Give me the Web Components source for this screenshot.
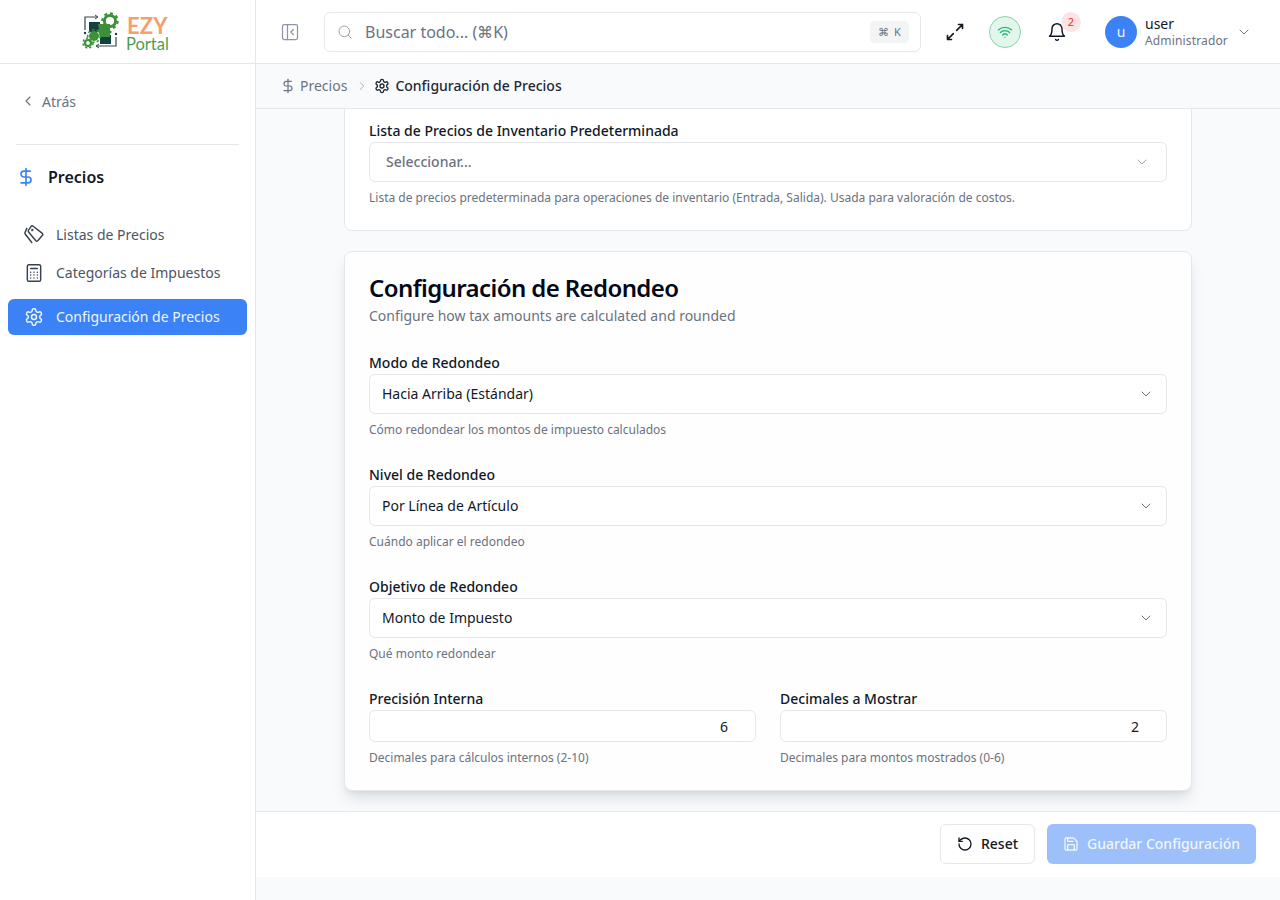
<!doctype html>
<html lang="es">
<head>
<meta charset="utf-8">
<title>Configuración de Precios</title>
<style>
  html, body { margin: 0; height: 100%; overflow: hidden; }
  body { font-family: "Noto Sans", sans-serif; background: #f8fafc; color: #111827; }
</style>
</head>
<body>
<app-shell>
  <app-sidebar slot="sidebar"></app-sidebar>
  <app-header slot="header"></app-header>
  <bread-crumb slot="crumbs"></bread-crumb>

  <form-card>
    <form-field label="Lista de Precios de Inventario Predeterminada" hint="Lista de precios predeterminada para operaciones de inventario (Entrada, Salida). Usada para valoración de costos.">
      <select-box placeholder value="Seleccionar..."></select-box>
    </form-field>
  </form-card>

  <form-card heading="Configuración de Redondeo" sub="Configure how tax amounts are calculated and rounded" raised>
    <form-field label="Modo de Redondeo" hint="Cómo redondear los montos de impuesto calculados">
      <select-box value="Hacia Arriba (Estándar)"></select-box>
    </form-field>
    <form-field label="Nivel de Redondeo" hint="Cuándo aplicar el redondeo">
      <select-box value="Por Línea de Artículo"></select-box>
    </form-field>
    <form-field label="Objetivo de Redondeo" hint="Qué monto redondear">
      <select-box value="Monto de Impuesto"></select-box>
    </form-field>
    <field-row>
      <form-field label="Precisión Interna" hint="Decimales para cálculos internos (2-10)">
        <number-box value="6"></number-box>
      </form-field>
      <form-field label="Decimales a Mostrar" hint="Decimales para montos mostrados (0-6)">
        <number-box value="2"></number-box>
      </form-field>
    </field-row>
  </form-card>

  <action-bar slot="footer"></action-bar>
</app-shell>

<script>
const ICONS = {
  panel: '<rect x="3" y="3" width="18" height="18" rx="2"/><path d="M9 3v18"/><path d="m16 15-3-3 3-3"/>',
  search: '<circle cx="11" cy="11" r="8"/><path d="m21 21-4.3-4.3"/>',
  expand: '<path d="M3 16.2V21m0 0h4.8M3 21l7-7"/><path d="M21 7.8V3m0 0h-4.8M21 3l-7 7"/>',
  wifi: '<path d="M12 20h.01"/><path d="M2 8.82a15 15 0 0 1 20 0"/><path d="M5 12.86a10 10 0 0 1 14 0"/><path d="M8.5 16.43a5 5 0 0 1 7 0"/>',
  bell: '<path d="M6 8a6 6 0 0 1 12 0c0 7 3 9 3 9H3s3-2 3-9"/><path d="M10.3 21a1.94 1.94 0 0 0 3.4 0"/>',
  down: '<path d="m6 9 6 6 6-6"/>',
  left: '<path d="m15 18-6-6 6-6"/>',
  right: '<path d="m9 18 6-6-6-6"/>',
  dollar: '<path d="M12 2v20"/><path d="M17 5H9.5a3.5 3.5 0 0 0 0 7h5a3.5 3.5 0 0 1 0 7H6"/>',
  tags: '<path d="M8.6 1.6 5.4 6.2a1.6 1.6 0 0 0 .1 2.1l8.7 10.6a1.6 1.6 0 0 0 2.3 0l5.6-6.6a1.6 1.6 0 0 0-.5-2.5L10.6 1.2a1.7 1.7 0 0 0-2 .4z"/><path d="M3.4 4 1.2 9a2 2 0 0 0 .4 2.1L9.4 21"/><circle cx="10" cy="6" r=".6"/>',
  calc: '<rect x="4" y="2" width="16" height="20" rx="2"/><path d="M8 6.5h8"/><path d="M8 11h.01M12 11h.01M16 11h.01M8 14.5h.01M12 14.5h.01M16 14.5h.01M8 18h.01M12 18h.01M16 18h.01"/>',
  gear: '<path d="M12.22 2h-.44a2 2 0 0 0-2 2v.18a2 2 0 0 1-1 1.73l-.43.25a2 2 0 0 1-2 0l-.15-.08a2 2 0 0 0-2.73.73l-.22.38a2 2 0 0 0 .73 2.73l.15.1a2 2 0 0 1 1 1.72v.51a2 2 0 0 1-1 1.74l-.15.09a2 2 0 0 0-.73 2.73l.22.38a2 2 0 0 0 2.73.73l.15-.08a2 2 0 0 1 2 0l.43.25a2 2 0 0 1 1 1.73V20a2 2 0 0 0 2 2h.44a2 2 0 0 0 2-2v-.18a2 2 0 0 1 1-1.73l.43-.25a2 2 0 0 1 2 0l.15.08a2 2 0 0 0 2.73-.73l.22-.39a2 2 0 0 0-.73-2.73l-.15-.08a2 2 0 0 1-1-1.74v-.5a2 2 0 0 1 1-1.74l.15-.09a2 2 0 0 0 .73-2.73l-.22-.38a2 2 0 0 0-2.73-.73l-.15.08a2 2 0 0 1-2 0l-.43-.25a2 2 0 0 1-1-1.73V4a2 2 0 0 0-2-2z"/><circle cx="12" cy="12" r="3"/>',
  reset: '<path d="M3 12a9 9 0 1 0 9-9 9.75 9.75 0 0 0-6.74 2.74L3 8"/><path d="M3 3v5h5"/>',
  save: '<path d="M15.2 3a2 2 0 0 1 1.4.6l3.8 3.8a2 2 0 0 1 .6 1.4V19a2 2 0 0 1-2 2H5a2 2 0 0 1-2-2V5a2 2 0 0 1 2-2z"/><path d="M17 21v-7a1 1 0 0 0-1-1H8a1 1 0 0 0-1 1v7"/><path d="M7 3v4a1 1 0 0 0 1 1h7"/>'
};

class uiIcon extends HTMLElement {
  connectedCallback() {
    const size = this.getAttribute("size") || 16;
    const weight = this.getAttribute("weight") || 2;
    this.attachShadow({ mode: "open" }).innerHTML = /* html */ `
      <style>:host { display: inline-flex; flex: none; } svg { display: block; overflow: visible; }</style>
      <svg width="${size}" height="${size}" viewBox="0 0 24 24" fill="none" stroke="currentColor"
        stroke-width="${weight}" stroke-linecap="round" stroke-linejoin="round">${ICONS[this.getAttribute("name")]}</svg>`;
  }
}

class appShell extends HTMLElement {
  connectedCallback() {
    this.attachShadow({ mode: "open" }).innerHTML = /* html */ `
      <style>
        :host { display: grid; grid-template-columns: 256px 1fr; height: 900px; width: 1280px; }
        .main { display: flex; flex-direction: column; min-width: 0; height: 900px; }
        .content {
          flex: 1; min-height: 0; overflow: hidden;
          display: flex; flex-direction: column; justify-content: flex-end; gap: 20px;
          padding: 0 88px 20px;
        }
        .spacer { height: 23px; flex: none; }
      </style>
      <slot name="sidebar"></slot>
      <div class="main">
        <slot name="header"></slot>
        <slot name="crumbs"></slot>
        <div class="content"><slot></slot></div>
        <slot name="footer"></slot>
        <div class="spacer"></div>
      </div>`;
  }
}

class appSidebar extends HTMLElement {
  connectedCallback() {
    this.attachShadow({ mode: "open" }).innerHTML = /* html */ `
      <style>
        :host { display: flex; flex-direction: column; height: 900px; background: #fff; border-right: 1px solid #e5e7eb; box-sizing: border-box; }
        .logo { height: 64px; box-sizing: border-box; border-bottom: 1px solid #e5e7eb; flex: none; display: flex; align-items: center; padding-left: 80px; }
        .back { display: flex; align-items: center; gap: 6px; margin: 27px 0 0 20px; height: 20px; font-size: 14px; color: #6b7280; }
        hr { border: 0; border-top: 1px solid #e5e7eb; margin: 33px 16px 0; }
        .module { display: flex; align-items: center; gap: 12px; margin: 21px 0 0 16px; height: 22px; font-size: 16px; font-weight: 600; color: #111827; }
        .module ui-icon { color: #3b82f6; }
        nav { display: flex; flex-direction: column; margin: 28px 8px 0; }
      </style>
      <div class="logo"><ezy-logo></ezy-logo></div>
      <div class="back"><ui-icon name="left" size="16" weight="1.75"></ui-icon>Atrás</div>
      <hr>
      <div class="module"><ui-icon name="dollar" size="20"></ui-icon>Precios</div>
      <nav>
        <nav-item icon="tags" style="height:38px">Listas de Precios</nav-item>
        <nav-item icon="calc" style="height:38px">Categorías de Impuestos</nav-item>
        <nav-item icon="gear" active style="margin-top:7px">Configuración de Precios</nav-item>
      </nav>`;
  }
}

class navItem extends HTMLElement {
  connectedCallback() {
    this.attachShadow({ mode: "open" }).innerHTML = /* html */ `
      <style>
        :host { display: flex; align-items: center; gap: 12px; height: 36px; padding-left: 16px; border-radius: 6px; font-size: 14px; color: #4b5563; box-sizing: border-box; padding-bottom: 2px; }
        :host([active]) { background: #3b82f6; color: #eff6ff; }
        ui-icon { color: #374151; margin-top: 1px; }
        :host([active]) ui-icon { color: #eff6ff; }
      </style>
      <ui-icon name="${this.getAttribute("icon")}" size="20" weight="1.75"></ui-icon><slot></slot>`;
  }
}

class ezyLogo extends HTMLElement {
  connectedCallback() {
    this.attachShadow({ mode: "open" }).innerHTML = /* html */ `
      <style>
        :host { display: flex; align-items: center; gap: 3px; }
        svg { margin-top: 3px; }
        .words { display: flex; flex-direction: column; font-family: Lato, sans-serif; padding-top: 4px; }
        .ezy { font-size: 22px; line-height: 21px; font-weight: 700; color: #f4a06c; letter-spacing: .2px; }
        .portal { font-size: 16.5px; line-height: 16px; color: #4c9f50; margin-left: -1px; }
      </style>
      <svg width="44" height="42" viewBox="0 0 44 42" fill="none">
        <path d="M5 18V5h12M16 34h20V25" stroke="#33484f" stroke-width="1.2"/>
        <path d="M15 3l3 2-3 2M19 32l-3 2 3 2" stroke="#33484f" stroke-width="1"/>
        <path d="M9 10h11v10H9z" fill="#123f40"/>
        <path d="M20 23h11v9H20z" fill="#123f40"/>
        <circle cx="30" cy="9" r="5.6" stroke="#3c9138" stroke-width="3"/>
        <circle cx="30" cy="9" r="7.8" stroke="#3c9138" stroke-width="2" stroke-dasharray="3 3.1"/>
        <path d="M18 12h12v6l2 2-2 2v3H20l-1-4-2-2 2-2z" fill="#3c9138"/>
        <circle cx="14" cy="24" r="5" fill="#3c9138"/>
        <circle cx="14" cy="24" r="6.3" stroke="#3c9138" stroke-width="1.6" stroke-dasharray="2.4 2.1"/>
        <circle cx="8" cy="31" r="3" stroke="#3c9138" stroke-width="2.2"/>
        <circle cx="8" cy="31" r="5" stroke="#3c9138" stroke-width="1.5" stroke-dasharray="2.2 2"/>
        <circle cx="5" cy="21" r="1.2" fill="#1d3f42"/><circle cx="36" cy="22" r="1.2" fill="#1d3f42"/>
      </svg>
      <div class="words"><span class="ezy">EZY</span><span class="portal">Portal</span></div>`;
  }
}

class appHeader extends HTMLElement {
  connectedCallback() {
    this.attachShadow({ mode: "open" }).innerHTML = /* html */ `
      <style>
        :host { display: flex; align-items: center; height: 64px; box-sizing: border-box; background: #fff; border-bottom: 1px solid #e5e7eb; padding: 0 28px 0 24px; flex: none; }
        .toggle { color: #8f95a8; display: flex; margin-right: 24px; }
        .search { width: 597px; height: 40px; box-sizing: border-box; border: 1px solid #e5e7eb; border-radius: 6px; display: flex; align-items: center; padding: 0 11px 0 12px; color: #6b7280; font-size: 16px; }
        .search ui-icon { color: #9ca3af; margin-right: 12px; }
        .search > span { flex: 1; }
        kbd { font: 11px "Noto Sans", sans-serif; background: #f3f4f6; color: #6b7280; border-radius: 4px; height: 22px; width: 39px; display: flex; align-items: center; justify-content: center; gap: 5px; }
        kbd i { font-style: normal; }
        .full { color: #111827; margin-left: 24px; display: flex; }
        .wifi { width: 32px; height: 32px; box-sizing: border-box; border-radius: 50%; background: #e3f6ec; border: 1px solid #86d4ac; color: #22b573; display: flex; align-items: center; justify-content: center; margin-left: 24px; }
        .bell { position: relative; display: flex; margin-left: 26px; color: #111827; }
        .badge { position: absolute; top: -10px; left: 14px; width: 20px; height: 20px; border-radius: 50%; background: #fde4e4; color: #ef4444; font-size: 11px; font-weight: 500; display: flex; align-items: center; justify-content: center; }
        .avatar { width: 32px; height: 32px; border-radius: 50%; background: #3b82f6; color: #eff6ff; font-size: 14px; display: flex; align-items: center; justify-content: center; margin-left: 38px; }
        .who { margin-left: 8px; width: 90px; display: flex; flex-direction: column; }
        .who b { font-weight: 400; font-size: 14px; line-height: 19px; color: #111827; }
        .who span { font-size: 12px; line-height: 16px; color: #6b7280; letter-spacing: .15px; }
        .chev { color: #6b7280; margin-left: 1px; display: flex; }
      </style>
      <span class="toggle"><ui-icon name="panel" size="20" weight="1.5"></ui-icon></span>
      <div class="search"><ui-icon name="search" size="16" weight="1.5"></ui-icon><span>Buscar todo... (⌘K)</span><kbd><i>⌘</i><i>K</i></kbd></div>
      <span class="full"><ui-icon name="expand" size="20"></ui-icon></span>
      <span class="wifi"><ui-icon name="wifi" size="16"></ui-icon></span>
      <span class="bell"><ui-icon name="bell" size="20" weight="1.75"></ui-icon><span class="badge">2</span></span>
      <span class="avatar">u</span>
      <div class="who"><b>user</b><span>Administrador</span></div>
      <span class="chev"><ui-icon name="down" size="16" weight="1.5"></ui-icon></span>`;
  }
}

class breadCrumb extends HTMLElement {
  connectedCallback() {
    this.attachShadow({ mode: "open" }).innerHTML = /* html */ `
      <style>
        :host { display: flex; align-items: center; height: 45px; box-sizing: border-box; border-bottom: 1px solid #e5e7eb; background: #f8fafc; padding: 0 0 1px 24px; font-size: 14px; flex: none; color: #6b7280; }
        .root { display: flex; align-items: center; gap: 4px; }
        .sep { color: #9ca3af; display: flex; margin: 0 5px 0 8px; }
        .cur { display: flex; align-items: center; gap: 5px; color: #1f2937; font-weight: 500; }
        .cur ui-icon { color: #1f2937; }
      </style>
      <span class="root"><ui-icon name="dollar" size="16" weight="1.75"></ui-icon>Precios</span>
      <span class="sep"><ui-icon name="right" size="14" weight="1.5"></ui-icon></span>
      <span class="cur"><ui-icon name="gear" size="16"></ui-icon>Configuración de Precios</span>`;
  }
}

class formCard extends HTMLElement {
  connectedCallback() {
    const heading = this.getAttribute("heading");
    const head = heading ? /* html */ `
      <h2>${heading}</h2>
      <p>${this.getAttribute("sub")}</p>` : "";
    this.attachShadow({ mode: "open" }).innerHTML = /* html */ `
      <style>
        :host { display: block; flex: none; background: #fff; border: 1px solid #e5e7eb; border-radius: 8px; padding: 20px 24px 24px; box-sizing: border-box; }
        :host([raised]) { background: #fefeff; box-shadow: 0 10px 15px -3px rgba(15,23,42,.12), 0 4px 6px -4px rgba(15,23,42,.1); }
        h2 { margin: 0; font-size: 24px; line-height: 32px; font-weight: 600; color: #020817; letter-spacing: -.6px; }
        p { margin: 2px 0 27px; font-size: 14px; line-height: 20px; color: #6b7280; }
        .stack { display: flex; flex-direction: column; gap: 27px; }
      </style>
      ${head}
      <div class="stack"><slot></slot></div>`;
  }
}

class fieldRow extends HTMLElement {
  connectedCallback() {
    this.attachShadow({ mode: "open" }).innerHTML = /* html */ `
      <style>:host { display: grid; grid-template-columns: 1fr 1fr; gap: 24px; }</style>
      <slot></slot>`;
  }
}

class formField extends HTMLElement {
  connectedCallback() {
    this.attachShadow({ mode: "open" }).innerHTML = /* html */ `
      <style>
        :host { display: block; }
        label { display: block; font-size: 14px; line-height: 20px; font-weight: 500; color: #111827; margin-bottom: 1px; }
        .hint { font-size: 12px; line-height: 16px; color: #6b7280; margin-top: 8px; }
      </style>
      <label>${this.getAttribute("label")}</label>
      <slot></slot>
      <div class="hint">${this.getAttribute("hint")}</div>`;
  }
}

class selectBox extends HTMLElement {
  connectedCallback() {
    this.attachShadow({ mode: "open" }).innerHTML = /* html */ `
      <style>
        :host { display: flex; align-items: center; justify-content: space-between; height: 40px; box-sizing: border-box; border: 1px solid #e5e7eb; border-radius: 6px; background: #fff; padding: 0 12px; font-size: 14px; color: #111827; }
        :host([placeholder]) { padding: 0 16px; color: #6b7280; font-weight: 500; }
        span { margin-top: -2px; }
        ui-icon { color: #6b7280; }
        :host([placeholder]) ui-icon { color: #9ca3af; }
      </style>
      <span>${this.getAttribute("value")}</span>
      <ui-icon name="down" size="16" weight="1.5"></ui-icon>`;
  }
}

class numberBox extends HTMLElement {
  connectedCallback() {
    this.attachShadow({ mode: "open" }).innerHTML = /* html */ `
      <style>
        :host { display: flex; align-items: center; justify-content: flex-end; height: 32px; box-sizing: border-box; border: 1px solid #e5e7eb; border-radius: 6px; background: #fff; padding: 0 27px 0 12px; font-size: 14px; color: #111827; }
      </style>
      ${this.getAttribute("value")}`;
  }
}

class actionBar extends HTMLElement {
  connectedCallback() {
    this.attachShadow({ mode: "open" }).innerHTML = /* html */ `
      <style>
        :host { display: flex; align-items: center; justify-content: flex-end; gap: 12px; height: 66px; box-sizing: border-box; background: #fff; border-top: 1px solid #e5e7eb; padding: 0 24px 2px; flex: none; }
        .btn { display: flex; align-items: center; gap: 8px; height: 40px; box-sizing: border-box; border-radius: 6px; padding: 0 16px; font-size: 14px; font-weight: 500; }
        .reset { border: 1px solid #e5e7eb; background: #fff; color: #111827; }
        .save { background: #9dbffa; color: #eff6ff; }
      </style>
      <div class="btn reset"><ui-icon name="reset" size="16"></ui-icon>Reset</div>
      <div class="btn save"><ui-icon name="save" size="16"></ui-icon>Guardar Configuración</div>`;
  }
}

customElements.define("ui-icon", uiIcon);
customElements.define("app-shell", appShell);
customElements.define("app-sidebar", appSidebar);
customElements.define("nav-item", navItem);
customElements.define("ezy-logo", ezyLogo);
customElements.define("app-header", appHeader);
customElements.define("bread-crumb", breadCrumb);
customElements.define("form-card", formCard);
customElements.define("field-row", fieldRow);
customElements.define("form-field", formField);
customElements.define("select-box", selectBox);
customElements.define("number-box", numberBox);
customElements.define("action-bar", actionBar);
</script>
</body>
</html>
